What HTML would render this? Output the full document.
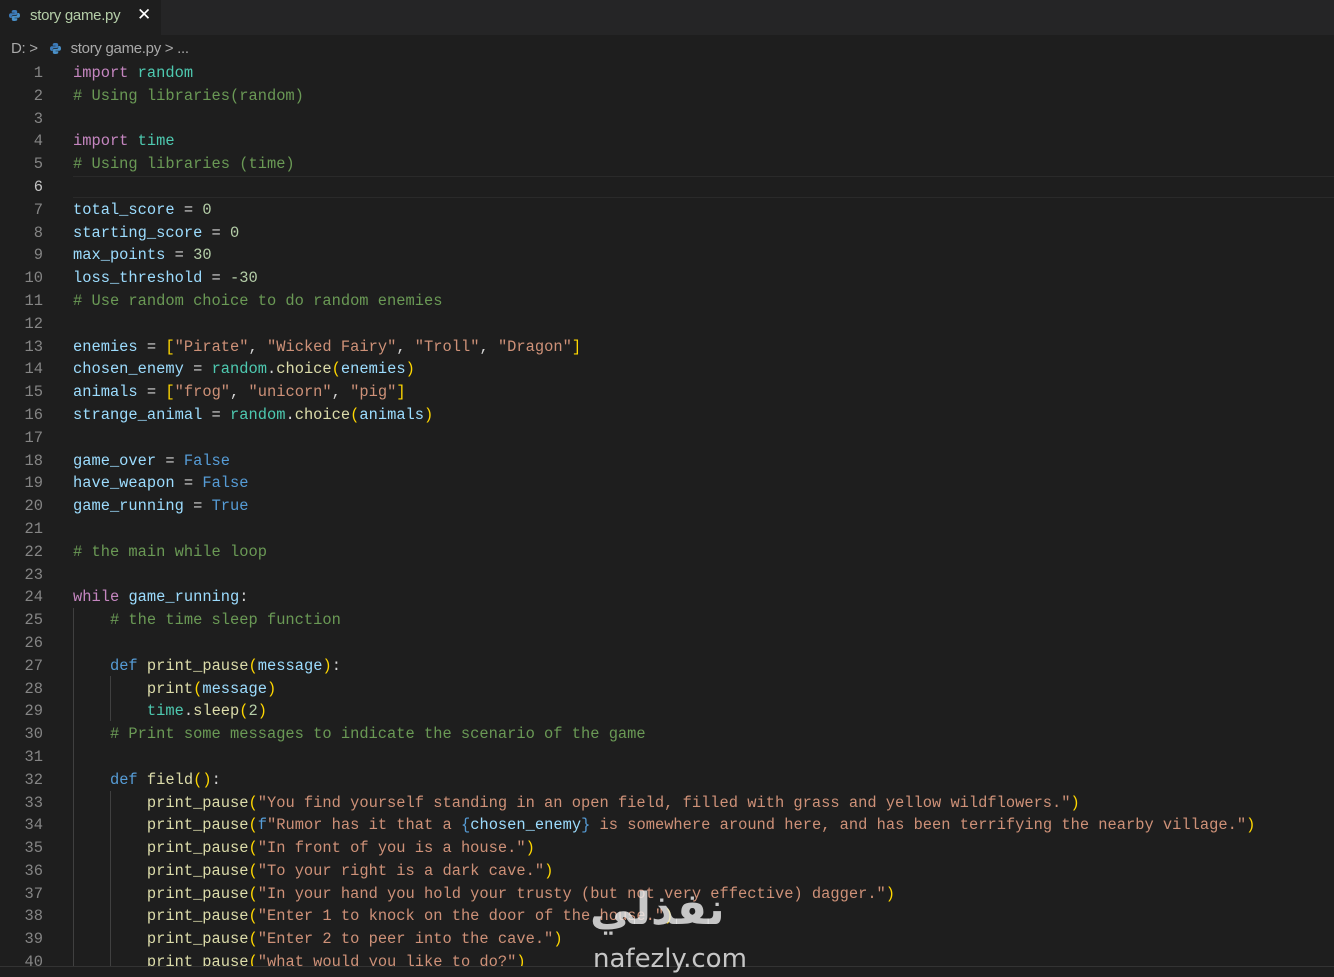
<!DOCTYPE html>
<html><head><meta charset="utf-8"><style>
html,body{margin:0;padding:0;width:1334px;height:976px;overflow:hidden;background:#1e1e1e;font-family:"Liberation Sans",sans-serif}
.tabbar{position:absolute;left:0;top:0;width:1334px;height:35px;background:#252526}
.tab{position:absolute;left:0;top:0;width:161px;height:35px;background:#1e1e1e;color:#fff;font-size:15px}
.tab .n{position:absolute;left:30px;top:7px;letter-spacing:-0.3px}
.tab .x{position:absolute;left:137px;top:5px;font-size:17px}
.py{position:absolute;width:11px;height:11px}
.crumb{position:absolute;left:11px;top:40px;color:#a9a9a9;font-size:15px;letter-spacing:-0.3px}
.code{position:absolute;left:0;top:62px;width:1334px;font-family:"Liberation Mono",monospace;font-size:15.4px}
.l{height:22.8px;line-height:22.8px;position:relative}
.ln{position:absolute;left:0;width:43px;color:#858585;text-align:right}
.t{position:absolute;left:73px;color:#d4d4d4;white-space:pre}
.cur{position:absolute;left:73px;right:0;top:0;height:20px;border-top:1px solid #2a2a2a;border-bottom:1px solid #2a2a2a}
.k{color:#c586c0}.b{color:#569cd6}.m{color:#4ec9b0}.v{color:#9cdcfe}.f{color:#dcdcaa}.s{color:#ce9178}.c{color:#6a9955}.n{color:#b5cea8}
.y{color:#ffd700}.p{color:#da70d6}.q{color:#179fff}
.guide{position:absolute;width:1px;background:#404040}
.status{position:absolute;left:0;top:966px;width:1334px;height:10px;background:#1e1e1e;border-top:1px solid #333}
.wm{position:absolute;color:rgba(235,235,235,0.82);font-family:"DejaVu Sans",sans-serif}
</style></head><body>
<div class="tabbar"><div class="tab">
<svg class="py" style="left:9px;top:10px" viewBox="0 0 12 12"><path d="M6 0C3 0 3 1.3 3 1.3V3h3v.5H2S0 3.3 0 6s1.8 2.7 1.8 2.7H3V7.2S3 5.6 4.6 5.6h2.7S8.9 5.6 8.9 4V1.5S9.1 0 6 0z" fill="#3c7ab8"/><path d="M6 12c3 0 3-1.3 3-1.3V9H6v-.5h4S12 8.7 12 6s-1.8-2.7-1.8-2.7H9v1.5S9 6.4 7.4 6.4H4.7S3.1 6.4 3.1 8v2.5S2.9 12 6 12z" fill="#4a90c8"/></svg>
<span class="n">story game.py</span><span class="x">✕</span></div></div>
<div class="crumb">D: &gt; <span style="display:inline-block;width:29px"></span>story game.py &gt; ...</div>
<svg class="py" style="left:50px;top:43px" viewBox="0 0 12 12"><path d="M6 0C3 0 3 1.3 3 1.3V3h3v.5H2S0 3.3 0 6s1.8 2.7 1.8 2.7H3V7.2S3 5.6 4.6 5.6h2.7S8.9 5.6 8.9 4V1.5S9.1 0 6 0z" fill="#3c7ab8"/><path d="M6 12c3 0 3-1.3 3-1.3V9H6v-.5h4S12 8.7 12 6s-1.8-2.7-1.8-2.7H9v1.5S9 6.4 7.4 6.4H4.7S3.1 6.4 3.1 8v2.5S2.9 12 6 12z" fill="#4a90c8"/></svg>
<div class="guide" style="left:73px;top:608px;height:368px"></div>
<div class="guide" style="left:110px;top:676px;height:45px"></div>
<div class="guide" style="left:110px;top:791px;height:185px"></div>
<div class="code">
<div class="l"><span class="ln">1</span><span class="t"><span class="k">import</span> <span class="m">random</span></span></div>
<div class="l"><span class="ln">2</span><span class="t"><span class="c"># Using libraries(random)</span></span></div>
<div class="l"><span class="ln">3</span></div>
<div class="l"><span class="ln">4</span><span class="t"><span class="k">import</span> <span class="m">time</span></span></div>
<div class="l"><span class="ln">5</span><span class="t"><span class="c"># Using libraries (time)</span></span></div>
<div class="l"><div class="cur"></div><span class="ln" style="color:#c6c6c6">6</span></div>
<div class="l"><span class="ln">7</span><span class="t"><span class="v">total_score</span> = <span class="n">0</span></span></div>
<div class="l"><span class="ln">8</span><span class="t"><span class="v">starting_score</span> = <span class="n">0</span></span></div>
<div class="l"><span class="ln">9</span><span class="t"><span class="v">max_points</span> = <span class="n">30</span></span></div>
<div class="l"><span class="ln">10</span><span class="t"><span class="v">loss_threshold</span> = <span class="n">-30</span></span></div>
<div class="l"><span class="ln">11</span><span class="t"><span class="c"># Use random choice to do random enemies</span></span></div>
<div class="l"><span class="ln">12</span></div>
<div class="l"><span class="ln">13</span><span class="t"><span class="v">enemies</span> = <span class="y">[</span><span class="s">"Pirate"</span>, <span class="s">"Wicked Fairy"</span>, <span class="s">"Troll"</span>, <span class="s">"Dragon"</span><span class="y">]</span></span></div>
<div class="l"><span class="ln">14</span><span class="t"><span class="v">chosen_enemy</span> = <span class="m">random</span>.<span class="f">choice</span><span class="y">(</span><span class="v">enemies</span><span class="y">)</span></span></div>
<div class="l"><span class="ln">15</span><span class="t"><span class="v">animals</span> = <span class="y">[</span><span class="s">"frog"</span>, <span class="s">"unicorn"</span>, <span class="s">"pig"</span><span class="y">]</span></span></div>
<div class="l"><span class="ln">16</span><span class="t"><span class="v">strange_animal</span> = <span class="m">random</span>.<span class="f">choice</span><span class="y">(</span><span class="v">animals</span><span class="y">)</span></span></div>
<div class="l"><span class="ln">17</span></div>
<div class="l"><span class="ln">18</span><span class="t"><span class="v">game_over</span> = <span class="b">False</span></span></div>
<div class="l"><span class="ln">19</span><span class="t"><span class="v">have_weapon</span> = <span class="b">False</span></span></div>
<div class="l"><span class="ln">20</span><span class="t"><span class="v">game_running</span> = <span class="b">True</span></span></div>
<div class="l"><span class="ln">21</span></div>
<div class="l"><span class="ln">22</span><span class="t"><span class="c"># the main while loop</span></span></div>
<div class="l"><span class="ln">23</span></div>
<div class="l"><span class="ln">24</span><span class="t"><span class="k">while</span> <span class="v">game_running</span>:</span></div>
<div class="l"><span class="ln">25</span><span class="t">    <span class="c"># the time sleep function</span></span></div>
<div class="l"><span class="ln">26</span></div>
<div class="l"><span class="ln">27</span><span class="t">    <span class="b">def</span> <span class="f">print_pause</span><span class="y">(</span><span class="v">message</span><span class="y">)</span>:</span></div>
<div class="l"><span class="ln">28</span><span class="t">        <span class="f">print</span><span class="y">(</span><span class="v">message</span><span class="y">)</span></span></div>
<div class="l"><span class="ln">29</span><span class="t">        <span class="m">time</span>.<span class="f">sleep</span><span class="y">(</span><span class="n">2</span><span class="y">)</span></span></div>
<div class="l"><span class="ln">30</span><span class="t">    <span class="c"># Print some messages to indicate the scenario of the game</span></span></div>
<div class="l"><span class="ln">31</span></div>
<div class="l"><span class="ln">32</span><span class="t">    <span class="b">def</span> <span class="f">field</span><span class="y">()</span>:</span></div>
<div class="l"><span class="ln">33</span><span class="t">        <span class="f">print_pause</span><span class="y">(</span><span class="s">"You find yourself standing in an open field, filled with grass and yellow wildflowers."</span><span class="y">)</span></span></div>
<div class="l"><span class="ln">34</span><span class="t">        <span class="f">print_pause</span><span class="y">(</span><span class="b">f</span><span class="s">"Rumor has it that a </span><span class="b">{</span><span class="v">chosen_enemy</span><span class="b">}</span><span class="s"> is somewhere around here, and has been terrifying the nearby village."</span><span class="y">)</span></span></div>
<div class="l"><span class="ln">35</span><span class="t">        <span class="f">print_pause</span><span class="y">(</span><span class="s">"In front of you is a house."</span><span class="y">)</span></span></div>
<div class="l"><span class="ln">36</span><span class="t">        <span class="f">print_pause</span><span class="y">(</span><span class="s">"To your right is a dark cave."</span><span class="y">)</span></span></div>
<div class="l"><span class="ln">37</span><span class="t">        <span class="f">print_pause</span><span class="y">(</span><span class="s">"In your hand you hold your trusty (but not very effective) dagger."</span><span class="y">)</span></span></div>
<div class="l"><span class="ln">38</span><span class="t">        <span class="f">print_pause</span><span class="y">(</span><span class="s">"Enter 1 to knock on the door of the house."</span><span class="y">)</span></span></div>
<div class="l"><span class="ln">39</span><span class="t">        <span class="f">print_pause</span><span class="y">(</span><span class="s">"Enter 2 to peer into the cave."</span><span class="y">)</span></span></div>
<div class="l"><span class="ln">40</span><span class="t">        <span class="f">print_pause</span><span class="y">(</span><span class="s">"what would you like to do?"</span><span class="y">)</span></span></div>
</div>
<div class="status"></div>
<div class="wm" style="font-size:44px;font-weight:bold;left:590px;top:880px;line-height:60px">نفذلي</div>
<div class="wm" style="font-size:26px;left:593px;top:944px;line-height:30px">nafezly.com</div>
</body></html>
